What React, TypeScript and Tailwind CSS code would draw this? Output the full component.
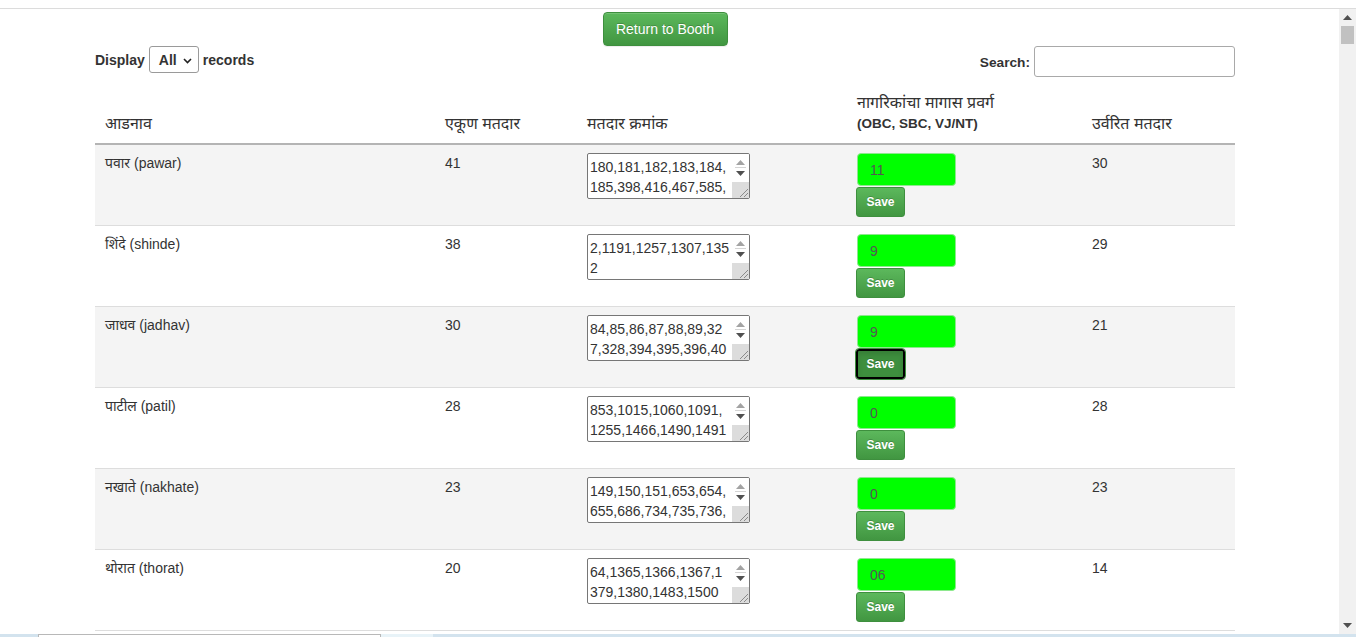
import React from "react";

type Row = {
  name: string;
  total: number;
  lines: string[];
  val: string;
  rem: number;
  focused?: boolean;
};

const rows: Row[] = [
  { name: "पवार (pawar)", total: 41, lines: ["180,181,182,183,184,", "185,398,416,467,585,"], val: "11", rem: 30 },
  { name: "शिंदे (shinde)", total: 38, lines: ["2,1191,1257,1307,135", "2"], val: "9", rem: 29 },
  { name: "जाधव (jadhav)", total: 30, lines: ["84,85,86,87,88,89,32", "7,328,394,395,396,40"], val: "9", rem: 21, focused: true },
  { name: "पाटील (patil)", total: 28, lines: ["853,1015,1060,1091,", "1255,1466,1490,1491"], val: "0", rem: 28 },
  { name: "नखाते (nakhate)", total: 23, lines: ["149,150,151,653,654,", "655,686,734,735,736,"], val: "0", rem: 23 },
  { name: "थोरात (thorat)", total: 20, lines: ["64,1365,1366,1367,1", "379,1380,1483,1500"], val: "06", rem: 14 },
];

const cols = "grid grid-cols-[340px_142px_270px_235px_153px]";

function FakeTextarea({ lines }: { lines: string[] }) {
  return (
    <div className="flex h-[46px] w-[163px] overflow-hidden rounded-[2px] border border-[#767676] bg-white">
      <div className="flex-1 overflow-hidden pl-[2px] pt-[3px] text-[14px] leading-[20px] text-[#333]">
        {lines.map((l, i) => (
          <div key={i} className="whitespace-nowrap">
            {l}
          </div>
        ))}
      </div>
      <div className="flex w-[17px] flex-col bg-white">
        <div className="flex h-[13px] items-end justify-center pb-[2px]">
          <svg width="9" height="5" viewBox="0 0 9 5">
            <polygon points="0,5 9,5 4.5,0" fill="#a3a3a3" />
          </svg>
        </div>
        <div className="mx-[3px] h-px bg-[#d4d4d4]" />
        <div className="flex h-[14px] items-start justify-center pt-[3px]">
          <svg width="9" height="5" viewBox="0 0 9 5">
            <polygon points="0,0 9,0 4.5,5" fill="#505050" />
          </svg>
        </div>
        <div className="relative flex-1 bg-[#dcdcdc]">
          <svg className="absolute bottom-[1px] right-[1px]" width="10" height="10" viewBox="0 0 10 10">
            <line x1="2" y1="10" x2="10" y2="2" stroke="#8a8a8a" strokeWidth="1" />
            <line x1="6" y1="10" x2="10" y2="6" stroke="#8a8a8a" strokeWidth="1" />
          </svg>
        </div>
      </div>
    </div>
  );
}

export default function App() {
  return (
    <div className="relative flex h-[637px] w-[1356px] flex-col overflow-hidden bg-white text-[#333] [font-family:'Liberation_Sans','Noto_Sans_Devanagari','Lohit_Devanagari','Noto_Sans',Arial,sans-serif]">
      <div className="h-[9px] shrink-0 border-b border-[#dcdcdc]" />
      <div className="flex h-[625px] shrink-0">
        <div className="flex-1 overflow-hidden">
          <div className="ml-[95px] w-[1140px]">
            <div className="flex justify-center pt-[3px]">
              <button className="h-[34px] w-[125px] rounded-[4px] border border-[#3e8f3e] bg-[linear-gradient(to_bottom,#5cb85c_0,#419641_100%)] text-[14px] text-white [text-shadow:0_-1px_0_rgba(0,0,0,0.2)] shadow-[inset_0_1px_0_rgba(255,255,255,0.15),0_1px_1px_rgba(0,0,0,0.075)]">
                Return to Booth
              </button>
            </div>
            <div className="flex h-[31px] items-start justify-between">
              <div className="flex h-[27px] items-center text-[14px] font-bold">
                <span className="pt-[2px]">Display</span>
                <div className="relative ml-[4px] mr-[4px] flex h-[27px] w-[50px] items-center rounded-[3px] border border-[#9a9a9a] bg-white pl-[9px] pt-[1px]">
                  <span className="text-[14px] font-bold">All</span>
                  <svg className="absolute right-[6px] top-[11px]" width="9" height="6" viewBox="0 0 9 6">
                    <polyline points="1,1 4.5,4.5 8,1" fill="none" stroke="#222" strokeWidth="1.6" />
                  </svg>
                </div>
                <span className="pt-[2px]">records</span>
              </div>
              <div className="flex h-[31px] items-center text-[13.7px] font-bold">
                <span className="mr-[4px] pt-[3px]">Search:</span>
                <input className="h-[31px] w-[201px] rounded-[3px] border border-[#a9a9a9] bg-white outline-none" />
              </div>
            </div>
            <div className={`${cols} h-[68px] items-end border-b-2 border-[#b4b4b4] pb-[9px] text-[16px] leading-[21px]`}>
              <div className="pl-[10px]">आडनाव</div>
              <div className="pl-[10px]">एकूण मतदार</div>
              <div className="pl-[10px]">मतदार क्रमांक</div>
              <div className="pl-[10px]">
                <div>नागरिकांचा मागास प्रवर्ग</div>
                <div className="text-[13.5px] font-bold">(OBC, SBC, VJ/NT)</div>
              </div>
              <div className="pl-[10px]">उर्वरित मतदार</div>
            </div>
            {rows.map((r, i) => (
              <div
                key={i}
                className={`${cols} h-[81px] border-b border-[#dddddd] pt-[8px] text-[14px] leading-[20px] ${i % 2 === 0 ? "bg-[#f4f4f4]" : "bg-white"}`}
              >
                <div className="pl-[10px]">{r.name}</div>
                <div className="pl-[10px]">{r.total}</div>
                <div className="pl-[10px]">
                  <FakeTextarea lines={r.lines} />
                </div>
                <div className="flex flex-col items-start pl-[10px]">
                  <div className="flex h-[33px] w-[99px] items-center rounded-[4px] border border-[#8ee88e] bg-[#00ff00] pl-[12px] text-[14px] text-[#555]">
                    {r.val}
                  </div>
                  {r.focused ? (
                    <button className="-ml-px mt-px flex h-[30px] w-[49px] items-center justify-center rounded-[3px] border-2 border-black bg-[#3e8f3e] text-[12px] font-bold text-white outline outline-1 outline-[#3e8f3e] [text-shadow:0_-1px_0_rgba(0,0,0,0.2)] shadow-[inset_0_3px_5px_rgba(0,0,0,0.125)]">
                      Save
                    </button>
                  ) : (
                    <button className="-ml-px mt-px flex h-[30px] w-[49px] items-center justify-center rounded-[3px] border border-[#3e8f3e] bg-[linear-gradient(to_bottom,#5cb85c_0,#419641_100%)] text-[12px] font-bold text-white [text-shadow:0_-1px_0_rgba(0,0,0,0.2)]">
                      Save
                    </button>
                  )}
                </div>
                <div className="pl-[10px]">{r.rem}</div>
              </div>
            ))}
          </div>
        </div>
        <div className="flex w-[17px] flex-col bg-[#f1f1f1]">
          <div className="flex h-[17px] items-center justify-center">
            <svg width="9" height="5" viewBox="0 0 9 5">
              <polygon points="0,5 9,5 4.5,0" fill="#505050" />
            </svg>
          </div>
          <div className="mx-[2px] h-[18px] bg-[#c1c1c1]" />
          <div className="flex-1" />
          <div className="flex h-[17px] items-center justify-center">
            <svg width="9" height="5" viewBox="0 0 9 5">
              <polygon points="0,0 9,0 4.5,5" fill="#505050" />
            </svg>
          </div>
        </div>
      </div>
      <div className="flex h-[3px] shrink-0 bg-[#d3e3ee]">
        <div className="w-[38px]" />
        <div className="w-[343px] border-l border-r border-t border-[#b8b8b8] bg-white" />
        <div className="w-[52px] bg-[#e8f3f8]" />
        <div className="flex-1" />
      </div>
    </div>
  );
}
